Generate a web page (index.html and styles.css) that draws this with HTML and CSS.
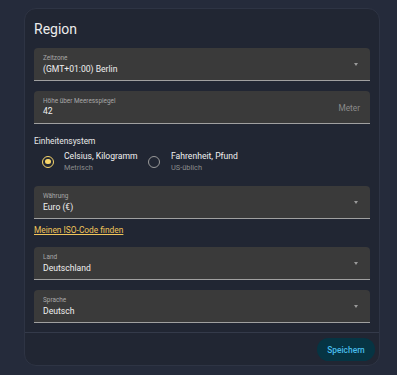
FILE: index.html
```html
<!DOCTYPE html>
<html lang="de">
<head>
<meta charset="utf-8">
<link rel="stylesheet" href="styles.css">
</head>
<body>
<div class="card">
  <div class="card-content">
    <h1 class="title">Region</h1>

    <div class="field select">
      <div class="label">Zeitzone</div>
      <div class="value">(GMT+01:00) Berlin</div>
      <span class="arrow"></span>
    </div>

    <div class="field text">
      <div class="label">Höhe über Meeresspiegel</div>
      <div class="value">42</div>
      <span class="suffix">Meter</span>
    </div>

    <div class="section-label">Einheitensystem</div>
    <div class="options">
      <div class="option">
        <span class="radio checked"></span>
        <div class="option-text">
          <div class="option-title">Celsius, Kilogramm</div>
          <div class="option-sub">Metrisch</div>
        </div>
      </div>
      <div class="option">
        <span class="radio"></span>
        <div class="option-text">
          <div class="option-title">Fahrenheit, Pfund</div>
          <div class="option-sub">US-üblich</div>
        </div>
      </div>
    </div>

    <div class="field select currency">
      <div class="label">Währung</div>
      <div class="value">Euro (€)</div>
      <span class="arrow"></span>
    </div>

    <a class="link" href="#">Meinen ISO-Code finden</a>

    <div class="field select country">
      <div class="label">Land</div>
      <div class="value">Deutschland</div>
      <span class="arrow"></span>
    </div>

    <div class="field select language">
      <div class="label">Sprache</div>
      <div class="value">Deutsch</div>
      <span class="arrow"></span>
    </div>
  </div>
  <div class="card-actions">
    <button class="save">Speichern</button>
  </div>
</div>
</body>
</html>
```

FILE: styles.css
```css
* { box-sizing: border-box; }
html, body {
  margin: 0;
  padding: 0;
  background: #252b3b;
  font-family: Roboto, "Noto Sans", sans-serif;
  color: #e1e1e1;
}
body { padding: 8px 0 0 24px; }

.card {
  width: 356px;
  height: 358px;
  background: #212633;
  border: 1px solid #2e3444;
  border-radius: 12px;
  display: flex;
  flex-direction: column;
}
.card-content {
  padding: 11px 9px 0 9px;
  display: flex;
  flex-direction: column;
  flex: 1;
}
.title {
  margin: 0;
  font-size: 14px;
  line-height: 18px;
  font-weight: 400;
  color: #ececec;
}

.field {
  position: relative;
  height: 33px;
  background: #3a3a3a;
  border-bottom: 1px solid #a0a0a0;
  border-radius: 4px 4px 0 0;
  padding: 6px 9px 0 9px;
  margin-top: 10px;
}
.label {
  font-size: 6.4px;
  line-height: 8px;
  color: #a8a8a8;
}
.value {
  font-size: 8.6px;
  line-height: 11px;
  margin-top: 2px;
  color: #f0f0f0;
}
.field.text .value { margin-top: 1px; }
.arrow {
  position: absolute;
  right: 12px;
  top: 15px;
  width: 0;
  height: 0;
  border-left: 2.5px solid transparent;
  border-right: 2.5px solid transparent;
  border-top: 3px solid #9a9a9a;
}
.suffix {
  position: absolute;
  right: 10px;
  top: 12px;
  font-size: 8.3px;
  line-height: 10px;
  color: #8a8a8a;
}

.section-label {
  margin-top: 11.5px;
  font-size: 8.4px;
  line-height: 10px;
  color: #e8e8e8;
}
.options {
  display: flex;
  margin-top: 5px;
}
.option {
  display: flex;
  align-items: center;
  gap: 10px;
  padding-left: 8px;
  width: 106px;
}
.option + .option { gap: 11px; }
.radio {
  width: 12px;
  height: 12px;
  border-radius: 50%;
  border: 1.6px solid #9a9a9a;
  flex: none;
  position: relative;
}
.radio.checked {
  border-color: #f7d56a;
}
.radio.checked::after {
  content: "";
  position: absolute;
  left: 50%;
  top: 50%;
  width: 5.5px;
  height: 5.5px;
  margin: -2.75px 0 0 -2.75px;
  border-radius: 50%;
  background: #f7d56a;
}
.option-title {
  font-size: 8.6px;
  line-height: 11px;
  color: #f0f0f0;
  white-space: nowrap;
}
.option-sub {
  font-size: 7.4px;
  line-height: 11px;
  color: #8c8c8c;
  white-space: nowrap;
}

.currency { margin-top: 13.5px; }
.link {
  margin-top: 6px;
  font-size: 8.4px;
  line-height: 10px;
  color: #f0c45a;
  text-decoration: underline;
  align-self: flex-start;
}
.country { margin-top: 12px; }

.card-actions {
  border-top: 1px solid #343a4a;
  display: flex;
  justify-content: flex-end;
  padding: 5px 4px 4px 0;
}
.save {
  width: 58px;
  height: 23px;
  border: none;
  border-radius: 12px;
  background: #063443;
  color: #48bdeb;
  font-family: Roboto, "Noto Sans", sans-serif;
  font-size: 8.4px;
  font-weight: 500;
  padding: 0;
}
```
